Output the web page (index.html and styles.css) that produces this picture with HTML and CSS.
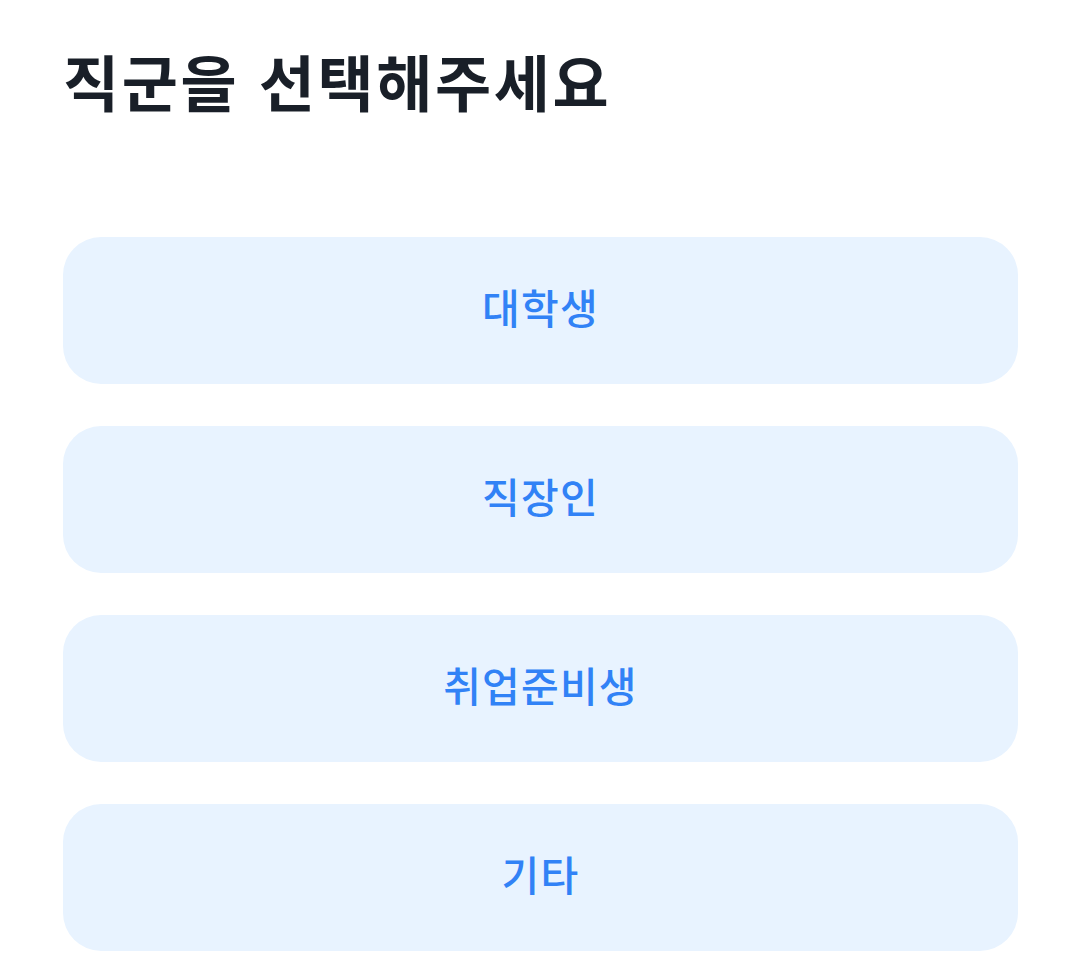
FILE: index.html
```html
<!DOCTYPE html>
<html lang="ko">
<head>
  <meta charset="UTF-8">
  <title>직군 선택</title>
  <link rel="stylesheet" href="styles.css">
</head>
<body>

<div class="page">
  <h1 class="title">직군을 선택해주세요</h1>

  <div class="options">
    <button class="option">대학생</button>
    <button class="option">직장인</button>
    <button class="option">취업준비생</button>
    <button class="option">기타</button>
  </div>
</div>

</body>
</html>
```

FILE: styles.css
```css
body {
  margin: 0;
  background: #fff;
  font-family: "Noto Sans CJK KR", "Noto Sans", sans-serif;
}

.page {
  padding: 36px 62px 0 63px;
}

.title {
  margin: 0;
  font-size: 61px;
  font-weight: 700;
  line-height: 90px;
  color: #191f28;
  letter-spacing: 2.6px;
}

.options {
  display: flex;
  flex-direction: column;
  gap: 42px;
  margin-top: 111px;
}

.option {
  height: 147px;
  padding: 0 0 10px;
  border: none;
  border-radius: 38px;
  background: #e8f3ff;
  color: #3182f6;
  font-family: inherit;
  font-size: 41px;
  font-weight: 500;
  letter-spacing: 1.2px;
  cursor: pointer;
}
```
